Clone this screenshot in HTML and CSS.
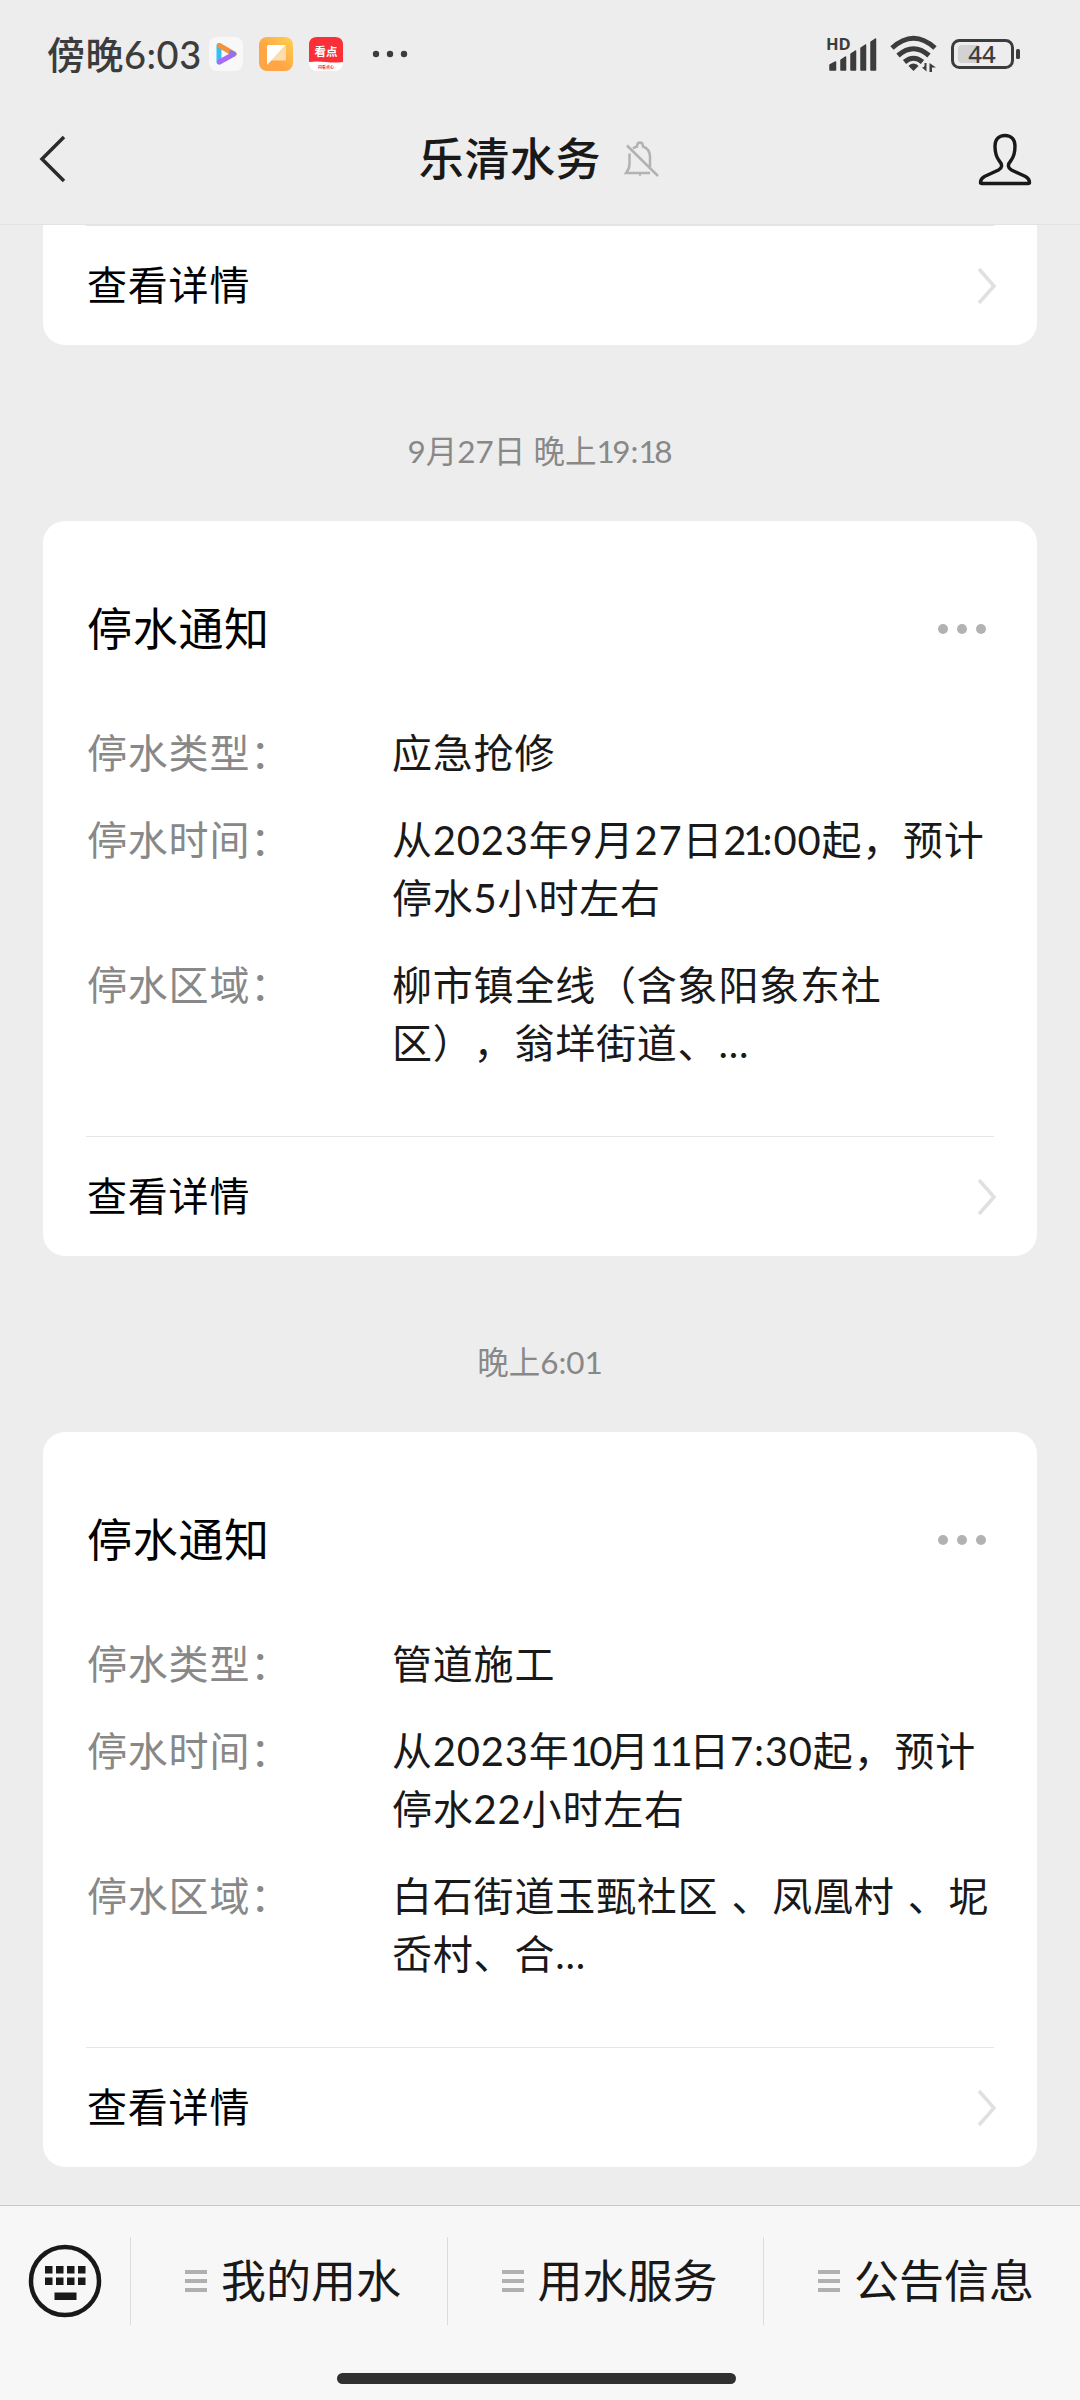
FILE: index.html
```html
<!DOCTYPE html>
<html lang="zh-CN">

<head>
    <meta charset="UTF-8">
    <meta name="viewport" content="width=device-width, initial-scale=1.0">
    <title>乐清水务</title>
    <link rel="stylesheet" href="styles.css">
</head>

<body>
    <!-- 状态栏 -->
    <div class="status">
        <span class="clock">傍晚6:03</span>
        <div class="apps">
            <svg width="34" height="34" viewBox="0 0 34 34">
                <rect width="34" height="34" rx="8" fill="#f8f8f9" />
                <path d="M10 8.500V25" stroke="#35bdf5" stroke-width="5" stroke-linecap="round" />
                <path d="M10.500 25L25 17" stroke="#a76bf5" stroke-width="5" stroke-linecap="round" />
                <path d="M10.500 8.500L25 17" stroke="#f5923c" stroke-width="5" stroke-linecap="round" />
                <path d="M22 15.300L25 17L22 18.700" fill="none" stroke="#8a74e8" stroke-width="4" stroke-linecap="round" stroke-linejoin="round" />
            </svg>
            <svg width="34" height="34" viewBox="0 0 34 34">
                <defs>
                    <linearGradient id="orange" x1="0" y1="1" x2="1" y2="0">
                        <stop offset="0.4" stop-color="#ffa544" />
                        <stop offset="1" stop-color="#ffd050" />
                    </linearGradient>
                </defs>
                <rect width="34" height="34" rx="8" fill="url(#orange)" />
                <path d="M12 23.500L27 9V22Q27 23.500 25.500 23.500Z" fill="#ffdcae" />
                <path d="M8 9.500Q8 8 9.500 8H27L8 28Z" fill="#fff" />
            </svg>
            <svg width="34" height="34" viewBox="0 0 34 34">
                <rect width="34" height="34" rx="8" fill="#fff" />
                <path d="M0 25V8Q0 0 8 0H26Q34 0 34 8V25Q26 26 17 25T0 25Z" fill="#fb2f37" />
                <text x="17" y="19" class="app-name">看点</text>
                <text x="17" y="31.500" class="app-sub">闪看点心</text>
            </svg>
        </div>
        <svg class="more-apps" width="36" height="8" viewBox="0 0 36 8">
            <circle cx="4" cy="4" r="3.200" />
            <circle cx="18" cy="4" r="3.200" />
            <circle cx="32" cy="4" r="3.200" />
        </svg>
        <div class="signals">
            <svg width="50" height="36" viewBox="0 0 50 36">
                <text x="-1" y="14" class="hd">HD</text>
                <path d="M3 34V29L8.500 26V34ZM14 34V24L18.500 21V34ZM24 34V18L28.500 15V34ZM34 34V12L38.500 9V34ZM44 34V6L48.500 3V34Z" stroke="#3c3c3c" stroke-width="1.500" stroke-linejoin="round" />
            </svg>
            <svg width="48" height="38" viewBox="0 0 48 38">
                <g fill="none" stroke="#3c3c3c" stroke-width="5">
                    <path d="M2 13Q23.500 -6.500 45 13" />
                    <path d="M8 20.500Q23.500 7 39 20.500" />
                    <path d="M14.500 27Q23.500 19.500 32.500 27" />
                </g>
                <path d="M23.500 28.500Q27 28.500 28.500 31L23.500 36L18.500 31Q20 28.500 23.500 28.500Z" />
                <path d="M36.500 28V36.500L32 32.500Q34 32 34.500 31V28ZM39.500 37V28L46 32.500H42V37Z" />
            </svg>
            <svg width="70" height="32" viewBox="0 0 70 32">
                <rect x="1.500" y="2.500" width="60" height="27" rx="7" fill="none" stroke="#3c3c3c" stroke-width="3" />
                <path d="M11 7H27V25H11Q7 25 7 21V11Q7 7 11 7Z" fill="#d2d2d2" />
                <rect x="65" y="11" width="4" height="10" rx="1.500" />
                <text x="31" y="25" class="level">44</text>
            </svg>
        </div>
    </div>

    <!-- 标题栏 -->
    <div class="nav">
        <svg class="back" width="28" height="50" viewBox="0 0 28 50">
            <path d="M25 3L3 25L25 47" />
        </svg>
        <div class="name">
            <h1>乐清水务</h1>
            <svg class="bell" width="36" height="38" viewBox="0 0 36 38">
                <path d="M7 9.500L3 5.500L34 36M5.500 13.500V24Q5.500 29 2 33H26M9 8.500Q11 7 13 6.500Q13 2.500 16 2.500T19 6.500Q26 9 26 17V27M15 34.500H17" />
            </svg>
        </div>
        <svg class="user" width="54" height="54" viewBox="0 0 54 54">
            <path d="M27 3.500C20.500 3.500 17 8 17 14C17 20 18 24.500 21 28.500C25 33 24 36 20.500 38L6.500 44.500C3 46.500 2.500 48.500 2.500 50.500Q2.500 51.500 4 51.500H50Q51.500 51.500 51.500 50.500C51.500 48.500 51 46.500 47.500 44.500L33.500 38C30 36 29 33 33 28.500C36 24.500 37 20 37 14C37 8 33.500 3.500 27 3.500Z" />
        </svg>
    </div>

    <!-- 消息列表 -->
    <div class="list">
        <div class="card card-cut">
            <a class="detail">查看详情
                <svg width="20" height="38" viewBox="0 0 20 38"><path d="M2 2L17 19L2 36" /></svg>
            </a>
        </div>

        <p class="time">9月27日 晚上<i>1</i>9:<i>1</i>8</p>

        <div class="card">
            <div class="card-head">
                <h2>停水通知</h2>
                <span class="dots"><b></b><b></b><b></b></span>
            </div>
            <dl>
                <dt>停水类型：</dt>
                <dd>应急抢修</dd>
                <dt>停水时间：</dt>
                <dd>从2023年9月27日<i>21</i>:00起，预计<br>停水5小时左右</dd>
                <dt>停水区域：</dt>
                <dd>柳市镇全线（含象阳象东社<br>区），翁垟街道、...</dd>
            </dl>
            <a class="detail">查看详情
                <svg width="20" height="38" viewBox="0 0 20 38"><path d="M2 2L17 19L2 36" /></svg>
            </a>
        </div>

        <p class="time">晚上6:01</p>

        <div class="card">
            <div class="card-head">
                <h2>停水通知</h2>
                <span class="dots"><b></b><b></b><b></b></span>
            </div>
            <dl>
                <dt>停水类型：</dt>
                <dd>管道施工</dd>
                <dt>停水时间：</dt>
                <dd>从2023年<i>10</i>月<i>11</i>日7:30起，预计<br>停水22小时左右</dd>
                <dt>停水区域：</dt>
                <dd>白石街道玉甄社区 、凤凰村 、坭<br>岙村、合...</dd>
            </dl>
            <a class="detail">查看详情
                <svg width="20" height="38" viewBox="0 0 20 38"><path d="M2 2L17 19L2 36" /></svg>
            </a>
        </div>
    </div>

    <!-- 底部菜单 -->
    <div class="tabbar">
        <div class="tabs">
            <div class="keyboard">
                <svg width="74" height="76" viewBox="0 0 74 76">
                    <circle cx="37" cy="38" r="34" fill="none" stroke="#191919" stroke-width="4.500" />
                    <path d="M17 23h7.500v7.500h-7.500zM28 23h7.500v7.500h-7.500zM39 23h7.500v7.500h-7.500zM50 23h7.500v7.500h-7.500zM17 34.500h7.500v7.500h-7.500zM28 34.500h7.500v7.500h-7.500zM39 34.500h7.500v7.500h-7.500zM50 34.500h7.500v7.500h-7.500zM26.500 49.500h22v7.500h-22z" fill="#191919" />
                </svg>
            </div>
            <div class="tab"><span class="bars"></span>我的用水</div>
            <div class="tab"><span class="bars"></span>用水服务</div>
            <div class="tab"><span class="bars"></span>公告信息</div>
        </div>
        <div class="home"></div>
    </div>
</body>

</html>
```
FILE: styles.css
```css
* {
    margin: 0;
    padding: 0;
    box-sizing: border-box;
}

body {
    display: flex;
    flex-direction: column;
    width: 1080px;
    height: 2400px;
    overflow: hidden;
    background-color: #ededed;
    color: #191919;
    font-family: Lato, "Noto Sans CJK SC", sans-serif;
    text-spacing-trim: space-all;
}

svg {
    display: block;
    flex-shrink: 0;
}

/* 带1的数字收窄一点 */
i {
    font-style: normal;
    letter-spacing: -3.5px;
}

/* 状态栏 */
.status {
    display: flex;
    align-items: center;
    height: 108px;
    padding: 0 59px 0 47px;
    fill: #3c3c3c;
    color: #3c3c3c;
}

.clock {
    width: 162px;
    font-size: 38px;
    font-weight: 500;
    line-height: 54px;
    letter-spacing: 0.5px;
    white-space: nowrap;
}

.apps {
    display: flex;
    gap: 16px;
}

.app-name {
    font-size: 11.5px;
    font-weight: 700;
    text-anchor: middle;
    fill: #fff;
}

.app-sub {
    font-size: 4px;
    font-weight: 700;
    text-anchor: middle;
    fill: #fb2f37;
}

.more-apps {
    margin-left: 29px;
}

.signals {
    display: flex;
    align-items: center;
    gap: 13px;
    margin-left: auto;
}

.signals svg {
    overflow: visible;
}

.hd {
    font-family: "Open Sans", sans-serif;
    font-size: 16.5px;
    font-weight: 700;
}

.level {
    font-family: "Noto Sans", sans-serif;
    font-size: 24px;
    font-weight: 500;
    text-anchor: middle;
}

/* 标题栏 */
.nav {
    display: flex;
    align-items: center;
    justify-content: space-between;
    height: 117px;
    padding: 0 48px 15px 39px;
    border-bottom: 1px solid #e3e3e3;
}

.back {
    fill: none;
    stroke: #2b2b2b;
    stroke-width: 3.5;
}

.name {
    display: flex;
    align-items: center;
    gap: 23px;
    margin-left: 34px;
}

h1 {
    font-size: 45px;
    font-weight: 500;
    line-height: 60px;
    letter-spacing: 0.6px;
}

.bell {
    fill: none;
    stroke: #b2b2b2;
    stroke-width: 2.5;
}

.user {
    fill: none;
    stroke: #191919;
    stroke-width: 3.4;
}

/* 消息列表 */
.list {
    flex: 1;
    padding: 0 43px;
}

.card {
    height: 735px;
    padding: 0 43px;
    border-radius: 22px;
    background-color: #fff;
}

.card-cut {
    height: 120px;
    border-radius: 0 0 22px 22px;
}

.card-head {
    display: flex;
    align-items: center;
    justify-content: space-between;
    height: 216px;
    padding: 0 8px 0 1px;
}

h2 {
    color: #000;
    font-size: 45px;
    font-weight: 400;
    line-height: 60px;
    letter-spacing: 0.7px;
}

.dots {
    display: flex;
    gap: 9px;
}

.dots b {
    width: 10px;
    height: 10px;
    border-radius: 50%;
    background-color: #b2b2b2;
}

dl {
    display: grid;
    grid-template-columns: 305px 1fr;
    row-gap: 29px;
    align-content: start;
    height: 399px;
    margin: -13px 0 13px;
    padding-left: 1px;
    font-size: 40px;
    line-height: 58px;
    letter-spacing: 0.8px;
    word-spacing: 2px;
    white-space: nowrap;
}

dt {
    color: #888;
}

.detail {
    display: flex;
    align-items: center;
    justify-content: space-between;
    height: 120px;
    margin-right: -3px;
    padding: 0 0 1px 1px;
    color: #000;
    font-size: 40px;
    line-height: 58px;
    letter-spacing: 0.8px;
    background: linear-gradient(#e5e5e5, #e5e5e5) 0 0 / 908px 1px no-repeat;
}

.detail svg {
    margin-top: 2px;
    fill: none;
    stroke: #e0e0e0;
    stroke-width: 3.5;
}

.time {
    height: 176px;
    color: #888;
    font-size: 31.5px;
    line-height: 212px;
    text-align: center;
}

.time i {
    letter-spacing: -2.5px;
}

/* 底部菜单 */
.tabbar {
    height: 195px;
    border-top: 1px solid #c8c8c8;
    background-color: #f7f7f7;
}

.tabs {
    display: flex;
    align-items: center;
    height: 150px;
}

.keyboard {
    width: 130px;
    padding-left: 28px;
}

.tab {
    display: flex;
    align-items: center;
    gap: 14px;
    width: 316.5px;
    height: 88px;
    padding-left: 54px;
    border-left: 1px solid #dcdcdc;
    font-size: 45px;
    line-height: 60px;
}

.bars {
    width: 22px;
    height: 22px;
    background: repeating-linear-gradient(#b0b0b0 0 4px, transparent 4px 9px);
}

.home {
    width: 399px;
    height: 11px;
    margin: 17px 0 0 337px;
    border-radius: 6px;
    background-color: #303030;
}
```
